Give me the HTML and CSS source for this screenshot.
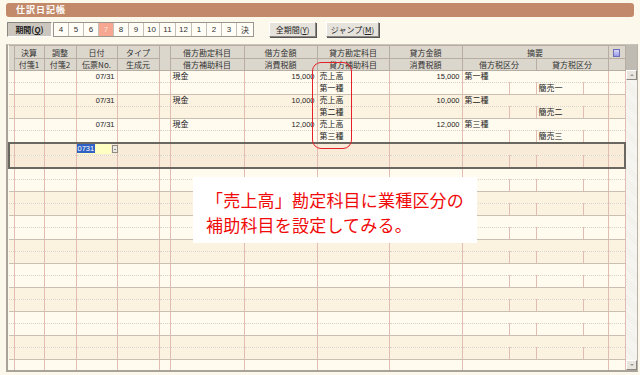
FILE: index.html
```html
<!DOCTYPE html>
<html lang="ja">
<head>
<meta charset="utf-8">
<title>仕訳日記帳</title>
<link rel="stylesheet" href="styles.css">
</head>
<body>
<div class="titlebar">仕訳日記帳</div>
<div class="toolbar">
  <button class="btn btn-period">期間(<u>Q</u>)</button>
  <div class="months">
    <span>4</span><span>5</span><span>6</span><span class="active">7</span><span>8</span><span>9</span><span class="wide">10</span><span class="wide">11</span><span class="wide">12</span><span>1</span><span>2</span><span>3</span><span class="kanji">決</span>
  </div>
  <button class="btn btn-all">全期間(<u>Y</u>)</button>
  <button class="btn btn-jump">ジャンプ(<u>M</u>)</button>
</div>
<div class="frame">
  <table class="ledger">
    <colgroup>
      <col class="w-gut"><col class="w-c1"><col class="w-c2"><col class="w-c3"><col class="w-c4"><col class="w-c5">
      <col class="w-c6"><col class="w-c7"><col class="w-c8"><col class="w-c9">
      <col class="w-c10"><col class="w-c11"><col class="w-c12"><col class="w-c13"><col class="w-c14">
    </colgroup>
    <thead>
      <tr class="h1">
        <th rowspan="2" class="gut"></th><th>決算</th><th>調整</th><th>日付</th><th>タイプ</th><th rowspan="2"></th>
        <th>借方勘定科目</th><th>借方金額</th><th>貸方勘定科目</th><th>貸方金額</th><th colspan="4">摘要</th>
        <th class="memo"><span class="memo-icon"></span></th>
      </tr>
      <tr class="h2">
        <th>付箋1</th><th>付箋2</th><th>伝票No.</th><th>生成元</th>
        <th>借方補助科目</th><th>消費税額</th><th>貸方補助科目</th><th>消費税額</th><th colspan="2">借方税区分</th><th colspan="2">貸方税区分</th><th></th>
      </tr>
    </thead>
    <tbody class="odd">
      <tr class="a"><td class="gut"></td><td></td><td></td><td class="num">07/31</td><td></td><td></td><td>現金</td><td class="num">15,000</td><td>売上高</td><td class="num">15,000</td><td colspan="4">第一種</td><td class="end"></td></tr>
      <tr class="b"><td class="gut"></td><td></td><td></td><td></td><td></td><td></td><td></td><td></td><td>第一種</td><td></td><td></td><td></td><td>簡売一</td><td></td><td class="end"></td></tr>
    </tbody>
    <tbody class="even">
      <tr class="a"><td class="gut"></td><td></td><td></td><td class="num">07/31</td><td></td><td></td><td>現金</td><td class="num">10,000</td><td>売上高</td><td class="num">10,000</td><td colspan="4">第二種</td><td class="end"></td></tr>
      <tr class="b"><td class="gut"></td><td></td><td></td><td></td><td></td><td></td><td></td><td></td><td>第二種</td><td></td><td></td><td></td><td>簡売二</td><td></td><td class="end"></td></tr>
    </tbody>
    <tbody class="odd">
      <tr class="a"><td class="gut"></td><td></td><td></td><td class="num">07/31</td><td></td><td></td><td>現金</td><td class="num">12,000</td><td>売上高</td><td class="num">12,000</td><td colspan="4">第三種</td><td class="end"></td></tr>
      <tr class="b"><td class="gut"></td><td></td><td></td><td></td><td></td><td></td><td></td><td></td><td>第三種</td><td></td><td></td><td></td><td>簡売三</td><td></td><td class="end"></td></tr>
    </tbody>
    <tbody class="even current">
      <tr class="a"><td class="gut"></td><td></td><td></td><td class="edit"><span class="input"><span class="sel">0731</span></span><span class="drop"></span></td><td></td><td></td><td></td><td></td><td></td><td></td><td colspan="4"></td><td class="end"></td></tr>
      <tr class="b"><td class="gut"></td><td></td><td></td><td></td><td></td><td></td><td></td><td></td><td></td><td></td><td></td><td></td><td></td><td></td><td class="end"></td></tr>
    </tbody>
    <tbody class="odd">
      <tr class="a"><td class="gut"></td><td></td><td></td><td></td><td></td><td></td><td></td><td></td><td></td><td></td><td colspan="4"></td><td class="end"></td></tr>
      <tr class="b"><td class="gut"></td><td></td><td></td><td></td><td></td><td></td><td></td><td></td><td></td><td></td><td></td><td></td><td></td><td></td><td class="end"></td></tr>
    </tbody>
    <tbody class="even">
      <tr class="a"><td class="gut"></td><td></td><td></td><td></td><td></td><td></td><td></td><td></td><td></td><td></td><td colspan="4"></td><td class="end"></td></tr>
      <tr class="b"><td class="gut"></td><td></td><td></td><td></td><td></td><td></td><td></td><td></td><td></td><td></td><td></td><td></td><td></td><td></td><td class="end"></td></tr>
    </tbody>
    <tbody class="odd">
      <tr class="a"><td class="gut"></td><td></td><td></td><td></td><td></td><td></td><td></td><td></td><td></td><td></td><td colspan="4"></td><td class="end"></td></tr>
      <tr class="b"><td class="gut"></td><td></td><td></td><td></td><td></td><td></td><td></td><td></td><td></td><td></td><td></td><td></td><td></td><td></td><td class="end"></td></tr>
    </tbody>
    <tbody class="even">
      <tr class="a"><td class="gut"></td><td></td><td></td><td></td><td></td><td></td><td></td><td></td><td></td><td></td><td colspan="4"></td><td class="end"></td></tr>
      <tr class="b"><td class="gut"></td><td></td><td></td><td></td><td></td><td></td><td></td><td></td><td></td><td></td><td></td><td></td><td></td><td></td><td class="end"></td></tr>
    </tbody>
    <tbody class="odd">
      <tr class="a"><td class="gut"></td><td></td><td></td><td></td><td></td><td></td><td></td><td></td><td></td><td></td><td colspan="4"></td><td class="end"></td></tr>
      <tr class="b"><td class="gut"></td><td></td><td></td><td></td><td></td><td></td><td></td><td></td><td></td><td></td><td></td><td></td><td></td><td></td><td class="end"></td></tr>
    </tbody>
    <tbody class="even">
      <tr class="a"><td class="gut"></td><td></td><td></td><td></td><td></td><td></td><td></td><td></td><td></td><td></td><td colspan="4"></td><td class="end"></td></tr>
      <tr class="b"><td class="gut"></td><td></td><td></td><td></td><td></td><td></td><td></td><td></td><td></td><td></td><td></td><td></td><td></td><td></td><td class="end"></td></tr>
    </tbody>
    <tbody class="odd">
      <tr class="a"><td class="gut"></td><td></td><td></td><td></td><td></td><td></td><td></td><td></td><td></td><td></td><td colspan="4"></td><td class="end"></td></tr>
      <tr class="b"><td class="gut"></td><td></td><td></td><td></td><td></td><td></td><td></td><td></td><td></td><td></td><td></td><td></td><td></td><td></td><td class="end"></td></tr>
    </tbody>
    <tbody class="even">
      <tr class="a"><td class="gut"></td><td></td><td></td><td></td><td></td><td></td><td></td><td></td><td></td><td></td><td colspan="4"></td><td class="end"></td></tr>
      <tr class="b"><td class="gut"></td><td></td><td></td><td></td><td></td><td></td><td></td><td></td><td></td><td></td><td></td><td></td><td></td><td></td><td class="end"></td></tr>
    </tbody>
    <tbody class="odd">
      <tr class="a"><td class="gut"></td><td></td><td></td><td></td><td></td><td></td><td></td><td></td><td></td><td></td><td colspan="4"></td><td class="end"></td></tr>
      <tr class="b"><td class="gut"></td><td></td><td></td><td></td><td></td><td></td><td></td><td></td><td></td><td></td><td></td><td></td><td></td><td></td><td class="end"></td></tr>
    </tbody>
  </table>
  <div class="scrollbar">
    <div class="sb-head"></div>
    <div class="sb-btn sb-up"></div>
    <div class="sb-track"></div>
    <div class="sb-btn sb-down"></div>
  </div>
</div>
<div class="highlight"></div>
<div class="callout">「売上高」勘定科目に業種区分の<br>補助科目を設定してみる。</div>
</body>
</html>
```

FILE: styles.css
```css
* { box-sizing: border-box; }
html, body { margin: 0; padding: 0; }
body {
  width: 640px;
  height: 375px;
  overflow: hidden;
  position: relative;
  background: #fdf8ec;
  font-family: "Liberation Sans", "Noto Sans CJK JP", sans-serif;
  color: #222;
}

.titlebar {
  margin: 3px 6px 0 6px;
  height: 14px;
  background: #c28a6b;
  border-radius: 3px;
  color: #fff;
  font: bold 9px/14px "Noto Sans CJK JP", sans-serif;
  padding-left: 10px;
  letter-spacing: 1px;
}

.toolbar {
  display: flex;
  align-items: stretch;
  height: 15px;
  margin: 5px 0 0 7px;
}

.btn {
  font: 8px/13px "Noto Sans CJK JP", sans-serif;
  color: #222;
  padding: 0;
  margin: 0;
  border: 1px solid;
  border-color: #fff #8a8680 #8a8680 #fff;
  background: #e6e3dc;
  box-shadow: 1px 1px 0 #555;
}
.btn u { text-decoration: underline; }
.btn-period {
  width: 45px;
  background: #cbc7bf;
  border-color: #8a8680 #fff #fff #8a8680;
  box-shadow: none;
  font-weight: bold;
}
.btn-all { width: 47px; margin-left: 15px; }
.btn-jump { width: 53px; margin-left: 10px; }

.months {
  display: flex;
  margin-left: 1px;
  border: 1px solid #9a968e;
  background: #fffdf6;
}
.months span {
  width: 15px;
  border-left: 1px solid #c4c0b8;
  font: 8px/13px "Liberation Sans", "Noto Sans CJK JP", sans-serif;
  text-align: center;
  color: #333;
}
.months span:first-child { border-left: none; width: 14px; }
.months span.wide { width: 16px; }
.months span.kanji { width: 17px; font-family: "Noto Sans CJK JP", sans-serif; }
.months span.active { background: #f7a791; color: #fbe3d9; }

.frame {
  display: flex;
  margin: 7px 0 0 6px;
  width: 632px;
  height: 328px;
  border-left: 2px solid #a9a399;
  border-bottom: 2px solid #a9a399;
  border-top: 1px solid #c9c3b9;
  border-right: 1px solid #b7b1a7;
  overflow: hidden;
}

.ledger {
  width: 616px;
  table-layout: fixed;
  border-collapse: collapse;
  font-size: 8px;
  align-self: flex-start;
}
.w-gut { width: 5px; }
.w-c1 { width: 30px; }
.w-c2 { width: 32px; }
.w-c3 { width: 41px; }
.w-c4 { width: 42px; }
.w-c5 { width: 11px; }
.w-c6 { width: 74px; }
.w-c7 { width: 73px; }
.w-c8 { width: 72px; }
.w-c9 { width: 73px; }
.w-c10 { width: 47px; }
.w-c11 { width: 27px; }
.w-c12 { width: 47px; }
.w-c13 { width: 25px; }
.w-c14 { width: 17px; }

.ledger th {
  background: #dcd7cd;
  font-weight: normal;
  color: #333;
  font: 8px/11px "Noto Sans CJK JP", sans-serif;
  border: 1px solid #b7ada3;
  padding: 0;
  white-space: nowrap;
  overflow: hidden;
}
.ledger tr.h1 { height: 13px; }
.ledger tr.h2 { height: 12px; }
.ledger th.gut { border-left: none; }

.memo { position: relative; }
.memo-icon {
  display: inline-block;
  width: 7px;
  height: 8px;
  margin-top: 2px;
  background: linear-gradient(#d8d8f8, #9a9ae8);
  border: 1px solid #6e6eb8;
  vertical-align: top;
}

.ledger td {
  height: 12px;
  padding: 0 2px;
  font: 8px/11px "Liberation Sans", "Noto Sans CJK JP", sans-serif;
  color: #222;
  white-space: nowrap;
  overflow: hidden;
  border-left: 1px solid #e3bdb4;
  border-right: 1px solid #e3bdb4;
}
.ledger td.gut { border-left: none; }
.ledger td.num { text-align: right; font-size: 7.5px; }
.ledger tr.a td { border-top: 1px solid #cbbfb1; border-bottom: 1px dotted #dcd3c6; }
.ledger tr.b td { border-bottom: 1px solid #cbbfb1; }

.ledger tbody.odd td { background: #fffbef; }
.ledger tbody.even td { background: #fbf2e0; }

.ledger tbody.current tr.a td { border-top: 2px solid #6a6660; }
.ledger tbody.current tr.b td { border-bottom: 2px solid #6a6660; }
.ledger tbody.current td.gut { border-left: 2px solid #6a6660; }
.ledger tbody.current td.end { border-right: 2px solid #6a6660; }
.ledger tbody.current td { background: #f8ecd8; }

.ledger td.edit { padding: 0; position: relative; overflow: visible; }
.input {
  display: inline-block;
  width: 34px;
  height: 10px;
  background: #ffffc2;
  vertical-align: top;
  font: 7.5px/10px "Liberation Sans", sans-serif;
}
.sel { background: #2f62c4; color: #fff; padding: 0 1px; }
.drop {
  display: inline-block;
  width: 6px;
  height: 8px;
  margin: 1px 0 0 1px;
  background: #ece9e2;
  border: 1px solid #8e8a84;
  vertical-align: top;
  position: relative;
}
.drop::after {
  content: "";
  position: absolute;
  left: 1px;
  top: 3px;
  border-left: 1px solid transparent;
  border-right: 1px solid transparent;
  border-top: 1px solid #333;
}

.scrollbar {
  width: 13px;
  display: flex;
  flex-direction: column;
  background: #efece6;
}
.sb-head { height: 25px; background: #bfbab2; }
.sb-btn {
  height: 10px;
  background: #e9e6df;
  border: 1px solid;
  border-color: #fff #8a8680 #8a8680 #fff;
  position: relative;
}
.sb-btn::after {
  content: "";
  position: absolute;
  left: 3px;
  top: 3px;
  border-left: 2px solid transparent;
  border-right: 2px solid transparent;
}
.sb-up::after { border-bottom: 2px solid #999; }
.sb-down::after { border-top: 2px solid #999; }
.sb-track {
  flex: 1;
  background-color: #f1efe9;
  background-image: repeating-linear-gradient(45deg, rgba(255,255,255,0.5) 0 1px, transparent 1px 2px);
}

.highlight {
  position: absolute;
  left: 312px;
  top: 62px;
  width: 40px;
  height: 87px;
  border: 1.5px solid #e6202a;
  border-radius: 9px;
}

.callout {
  position: absolute;
  left: 193px;
  top: 177px;
  width: 284px;
  height: 66px;
  background: #fff;
  color: #f00a0a;
  font: 17px/25px "Noto Sans CJK JP", sans-serif;
  padding: 10px 0 0 13px;
  letter-spacing: 0.2px;
}
```
